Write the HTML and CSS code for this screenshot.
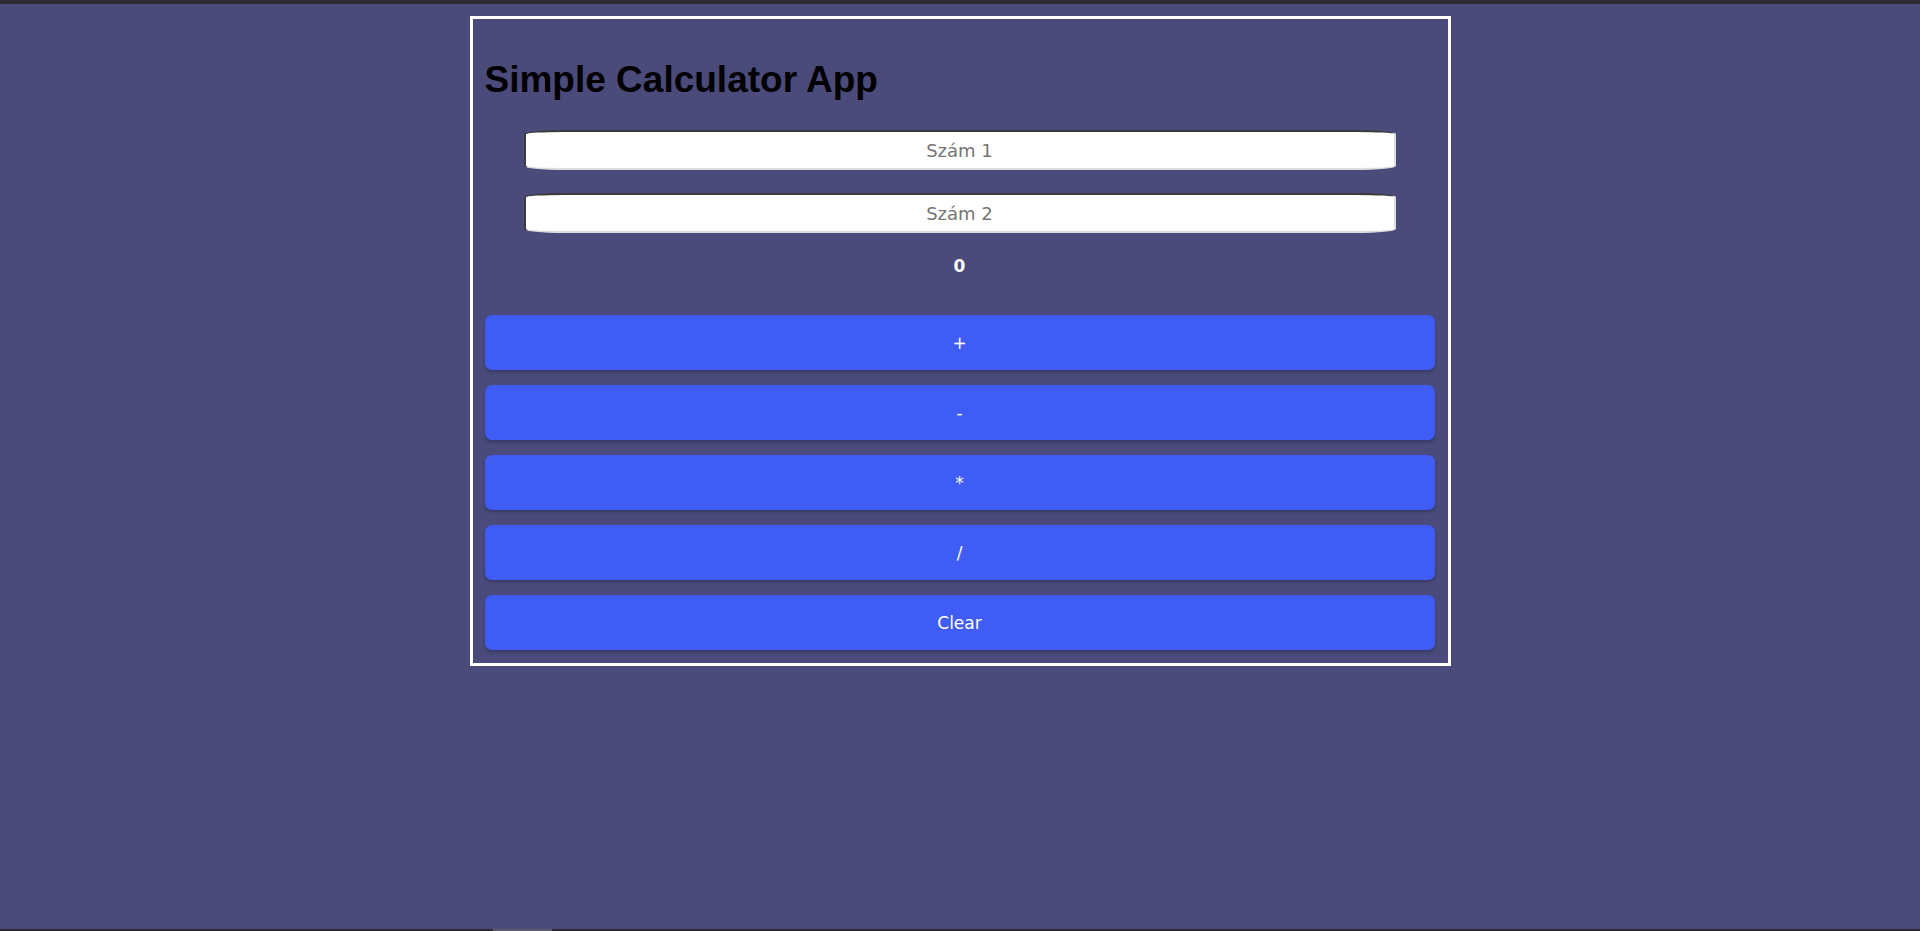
FILE: index.html
```html
<!DOCTYPE html>
<html lang="hu">
<head>
<meta charset="utf-8">
<title>Simple Calculator App</title>
<link rel="stylesheet" href="styles.css">
</head>
<body>
<div class="page">
  <div class="topbar"></div>
  <main class="main">
    <div class="calc">
      <h1 class="title">Simple Calculator App</h1>
      <input class="num" type="text" placeholder="Szám 1">
      <input class="num num-second" type="text" placeholder="Szám 2">
      <div class="result">0</div>
      <div class="ops">
        <button class="op">+</button>
        <button class="op">-</button>
        <button class="op">*</button>
        <button class="op">/</button>
        <button class="op">Clear</button>
      </div>
    </div>
  </main>
  <div class="bottombar"><span class="thumb"></span></div>
</div>
</body>
</html>
```
FILE: styles.css
```css
html, body {
  margin: 0;
  padding: 0;
  background: #4a4a7b;
}
.page {
  height: 100vh;
  display: flex;
  flex-direction: column;
}
.topbar {
  height: 4px;
  background: #2b2a33;
  flex: none;
}
.main {
  flex: 1;
  padding-top: 12px;
}
.bottombar {
  height: 2px;
  background: #2b2a33;
  flex: none;
  padding-left: 493px;
}
.thumb {
  display: block;
  width: 59px;
  height: 2px;
  background: #5a5a64;
}
.calc {
  box-sizing: border-box;
  width: 981px;
  margin: 0 auto;
  border: 3px solid #ffffff;
  padding: 13px 13px 13px 12px;
  display: flex;
  flex-direction: column;
  align-items: center;
}
.title {
  align-self: stretch;
  margin: 27px 0 29px 0;
  font-family: "Liberation Sans", Arial, sans-serif;
  font-weight: 700;
  font-size: 37px;
  line-height: 42px;
  color: #000000;
}
.num {
  box-sizing: border-box;
  width: 872px;
  height: 40px;
  margin: 0;
  border: 2px inset #8f8f8f;
  border-top-color: #8f8f8f;
  border-left-color: #8f8f8f;
  border-bottom-color: #dcdcdc;
  border-right-color: #dcdcdc;
  border-radius: 40px / 4px;
  background: #ffffff;
  text-align: center;
  font-family: "DejaVu Sans", Verdana, sans-serif;
  font-size: 18px;
  color: #333;
  outline: none;
}
.num::placeholder {
  color: #757575;
}
.num-second {
  margin-top: 23px;
}
.result {
  margin-top: 23px;
  font-family: "DejaVu Sans", Verdana, sans-serif;
  font-weight: 700;
  font-size: 17px;
  line-height: 21px;
  color: #ffffff;
}
.ops {
  align-self: stretch;
  margin-top: 38px;
  display: flex;
  flex-direction: column;
  gap: 15px;
}
.op {
  height: 55px;
  border: none;
  border-radius: 7px;
  background: #3f5cf5;
  box-shadow: 0 2px 3px rgba(20, 20, 60, 0.35);
  color: #ffffff;
  font-family: "DejaVu Sans", Verdana, sans-serif;
  font-size: 17px;
  cursor: pointer;
}
```
